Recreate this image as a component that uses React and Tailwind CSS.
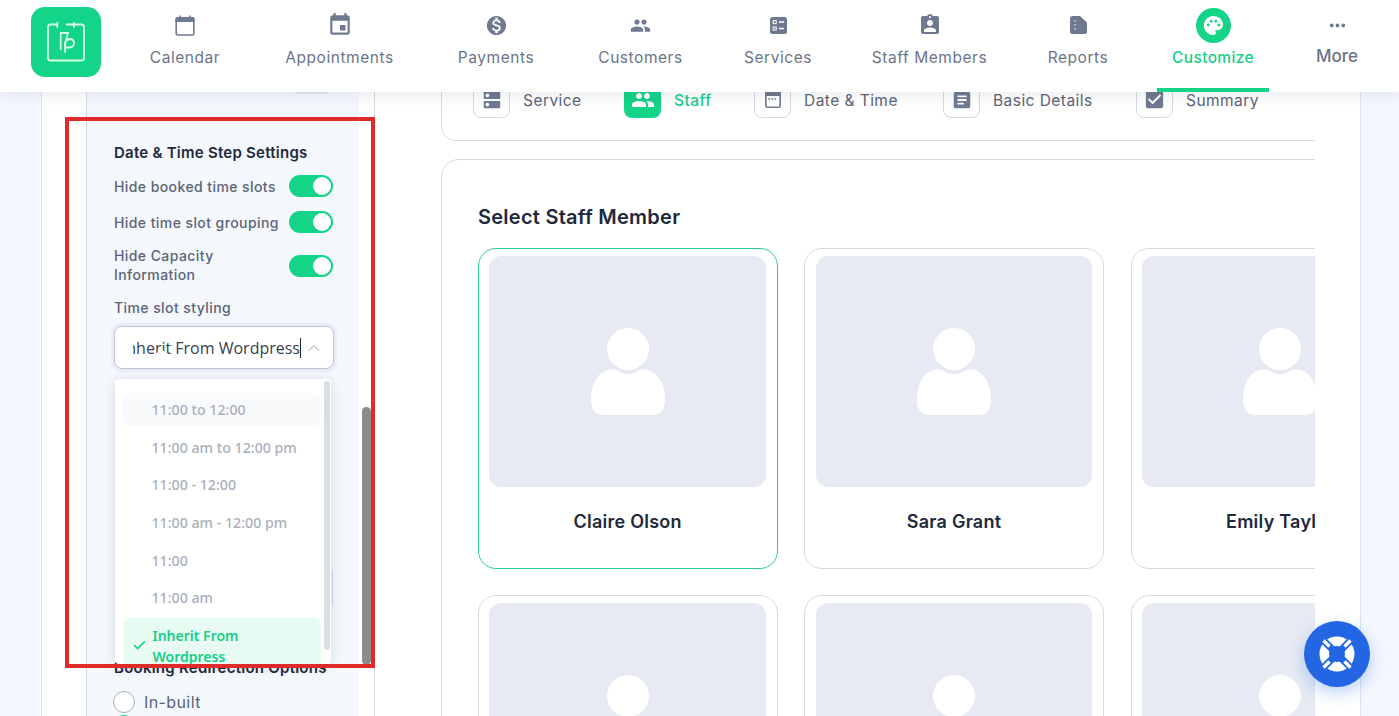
import { ChevronUp, Check } from 'lucide-react';
import { MdEvent, MdMonetizationOn, MdPeople, MdAssignmentInd, MdPalette, MdMoreHoriz, MdDns, MdArticle, MdCheckBox } from 'react-icons/md';

const CalendarIcon = () => (
  <svg width="20" height="21" viewBox="0 0 20 21" fill="none">
    <path d="M5 0.5 V3 M15 0.5 V3" stroke="#6f7a91" strokeWidth="1.6" />
    <path d="M2 2 H18 Q19.5 2 19.5 3.5 V7 H0.5 V3.5 Q0.5 2 2 2 Z" fill="#6f7a91" />
    <rect x="1.2" y="3" width="17.6" height="17" rx="1.5" stroke="#6f7a91" strokeWidth="1.6" />
  </svg>
);

const ServicesIcon = () => (
  <svg width="17" height="17" viewBox="0 0 17 17">
    <rect width="17" height="17" rx="2.5" fill="#6f7a91" />
    <rect x="3.2" y="3.6" width="3" height="3" fill="none" stroke="#fff" strokeWidth="1" />
    <rect x="3.2" y="10" width="3" height="3" fill="none" stroke="#fff" strokeWidth="1" />
    <path d="M9 5 H14 M9 11.5 H14" stroke="#fff" strokeWidth="1.4" />
  </svg>
);

const ReportsIcon = () => (
  <svg width="17" height="18" viewBox="0 0 17 18">
    <path d="M2.5 0 H10 L17 6.5 V15.5 Q17 18 14.5 18 H2.5 Q0 18 0 15.5 V2.5 Q0 0 2.5 0 Z" fill="#6f7a91" />
    <path d="M5 4 V14" stroke="#fff" strokeWidth="1" strokeDasharray="1.5 2.5" />
  </svg>
);

const DateTimeIcon = () => (
  <svg width="16" height="17" viewBox="0 0 16 17" fill="none">
    <rect x="0.8" y="0.8" width="14.4" height="15.4" rx="1.5" stroke="#6f7a91" strokeWidth="1.6" />
    <rect x="1" y="1" width="14" height="4" fill="#6f7a91" />
    <path d="M3.5 8 H12.5" stroke="#6f7a91" strokeWidth="1.4" strokeDasharray="1.6 1.4" />
  </svg>
);

const navItems = [
  { label: 'Calendar', icon: <CalendarIcon />, w: 'w-[140px]' },
  { label: 'Appointments', icon: <MdEvent size={26} color="#6f7a91" />, w: 'w-[169px]' },
  { label: 'Payments', icon: <MdMonetizationOn size={23} color="#6f7a91" />, w: 'w-[144px]' },
  { label: 'Customers', icon: <MdPeople size={21} color="#6f7a91" />, w: 'w-[145px]' },
  { label: 'Services', icon: <ServicesIcon />, w: 'w-[130px]' },
  { label: 'Staff Members', icon: <MdAssignmentInd size={24} color="#6f7a91" />, w: 'w-[173px]' },
  { label: 'Reports', icon: <ReportsIcon />, w: 'w-[124px]' },
];

const steps = [
  { label: 'Service', icon: <MdDns size={22} color="#6f7a91" />, w: 'w-[151px]' },
  { label: 'Staff', icon: <MdPeople size={24} color="#fff" />, w: 'w-[130px]', active: true },
  { label: 'Date & Time', icon: <DateTimeIcon />, w: 'w-[189px]' },
  { label: 'Basic Details', icon: <MdArticle size={22} color="#6f7a91" />, w: 'w-[193px]' },
  { label: 'Summary', icon: <MdCheckBox size={23} color="#6f7a91" />, w: 'w-[150px]' },
];

const timeOptions = ['11:00 to 12:00', '11:00 am to 12:00 pm', '11:00 - 12:00', '11:00 am - 12:00 pm', '11:00', '11:00 am'];
const toggles = ['Hide booked time slots', 'Hide time slot grouping'];
const staff = ['Claire Olson', 'Sara Grant', 'Emily Taylor', '', '', ''];

function Toggle() {
  return (
    <div className="flex h-[22px] w-[44px] shrink-0 items-center justify-end rounded-full bg-[#14d488] pr-[2px]">
      <div className="h-[18px] w-[18px] rounded-full bg-white" />
    </div>
  );
}

function StaffCard({ name, selected }) {
  return (
    <div className={`h-[321px] w-[300px] shrink-0 rounded-[18px] border bg-white pl-[10.3px] pr-[11px] pt-[7px] ${selected ? 'border-[#2fcb90]' : 'border-[#d5d9e4]'}`}>
      <div className="flex h-[231px] items-center justify-center rounded-[12px] bg-[#e7eaf3]">
        <svg width="74" height="88" viewBox="0 0 74 88" fill="#fff">
          <circle cx="37" cy="21" r="21" />
          <path d="M17 42 C23 41 26 42 29 44 C34 47 40 47 45 44 C48 42 51 41 57 42 C67 44 74 56 74 72 C74 81 70 87 62 87 L12 87 C4 87 0 81 0 72 C0 56 7 44 17 42 Z" />
        </svg>
      </div>
      <div className="mt-[21px] text-center text-[18px] font-semibold tracking-[0.25px] text-[#1e293b]">{name}</div>
    </div>
  );
}

export default function App() {
  return (
    <div className="flex h-[716px] w-[1399px] flex-col overflow-hidden bg-[#f4f7fd] font-['Inter',sans-serif]">
      <header className="relative z-10 flex h-[92px] shrink-0 items-start bg-white pl-[31px] shadow-[0_3px_14px_rgba(30,41,80,0.09)]">
        <div className="mt-[7px] flex h-[70px] w-[70px] shrink-0 items-center justify-center rounded-[14px] bg-[#14d488]">
          <svg width="38" height="40" viewBox="0 0 38 40" fill="none" stroke="#d8fbec" strokeWidth="1.8" strokeLinecap="round">
            <path d="M10 2.5 H3.5 Q1 2.5 1 5 V36 Q1 38.5 3.5 38.5 H34.5 Q37 38.5 37 36 V5 Q37 2.5 34.5 2.5 H19.7" />
            <path d="M10.3 0.8 V5 M27 0.8 V5" />
            <path d="M13.7 27 V11 H21 L18.5 21 M18 30 V22 Q18 17.5 23 17 Q27 17.5 27 21 Q27 25.5 22 25.5 H18" />
          </svg>
        </div>
        <nav className="ml-[14px] flex">
          {navItems.map(({ label, icon, w }) => (
            <div key={label} className={`flex h-[92px] flex-col items-center pt-[14px] ${w}`}>
              <div className="flex h-[22px] items-center justify-center">{icon}</div>
              <span className="mt-[10px] text-[15.5px] tracking-[0.55px] text-[#6b7488]">{label}</span>
            </div>
          ))}
          <div className="ml-[17px] flex h-[92px] w-[112px] flex-col items-center border-b-[4px] border-[#14d488] pt-[8px]">
            <div className="flex h-[35px] w-[35px] items-center justify-center rounded-full bg-[#14d488]">
              <MdPalette size={23} color="#fff" />
            </div>
            <span className="mt-[3px] whitespace-nowrap text-[15.5px] font-medium tracking-[0.35px] text-[#14cf87]">Customize</span>
          </div>
          <div className="flex h-[92px] w-[136px] flex-col items-center pt-[13px]">
            <div className="flex h-[24px] items-center"><MdMoreHoriz size={23} color="#6f7a91" /></div>
            <span className="mt-[7px] text-[17px] font-medium text-[#6b7488]">More</span>
          </div>
        </nav>
      </header>

      <div className="relative min-h-0 flex-1 pl-[41px]">
        <div className="flex h-full w-[1320px] overflow-hidden border-x border-[#dde2f2] bg-white">
          <aside className="relative ml-[44px] flex h-full w-[289px] shrink-0 border-x border-[#d5d9e4]">
            <div className="relative w-[272px] overflow-hidden bg-[#f4f7fc] pl-[27px] pr-[26px] pt-[51px]">
              <div className="absolute left-[208px] top-0 h-[2px] w-[33px] rounded-b bg-[#dfe3ee]" />
              <h3 className="text-[15px] font-semibold leading-[20px] tracking-[0.25px] text-[#1e293b]">Date &amp; Time Step Settings</h3>
              <div className="mt-[12px] flex flex-col gap-[14px]">
                {toggles.map(t => (
                  <div key={t} className="flex h-[22px] items-center justify-between whitespace-nowrap text-[14px] font-medium tracking-[0.42px] text-[#5b6478]">
                    <span>{t}</span>
                    <Toggle />
                  </div>
                ))}
                <div className="-mt-[1px] flex items-center justify-between text-[14px] font-medium leading-[19px] tracking-[0.42px] text-[#5b6478]">
                  <span className="w-[130px]">Hide Capacity Information</span>
                  <div className="pt-[2px]"><Toggle /></div>
                </div>
              </div>
              <div className="mt-[14px] text-[14px] font-medium leading-[20px] tracking-[0.42px] text-[#5b6478]">Time slot styling</div>
              <div className="mt-[8px] flex h-[43px] w-[220px] items-center overflow-hidden rounded-[8px] border border-[#bcc3d8] bg-white pl-[18px] pr-[12px] shadow-[0_0_0_3px_#e9ecf5]">
                <div className="flex w-[168px] shrink-0 justify-end overflow-hidden whitespace-nowrap border-r border-[#1e293b] font-['Open_Sans',sans-serif] text-[16px] leading-[20px] text-[#344054]">
                  <span className="shrink-0">Inherit From Wordpress</span>
                </div>
                <ChevronUp size={20} className="ml-[3px] shrink-0 text-[#c3c8d4]" strokeWidth={1.3} />
              </div>
              <div className="absolute left-[68px] top-[256px] z-20 h-0 w-0 border-x-[6px] border-b-[7px] border-x-transparent border-b-white" />
              <div className="absolute left-[245px] top-[478px] h-[35px] w-px bg-[#d5d9e4]" />
              <div className="relative ml-[1px] mt-[10px] h-[285px] w-[216px] overflow-hidden rounded-[4px] bg-white pl-[8px] pr-[10px] pt-[12px] shadow-[0_2px_12px_rgba(30,41,80,0.14)]">
                <div className="absolute right-[1px] top-[2px] h-[269px] w-[6px] rounded-full bg-[#dcdfe2]" />
                <div className="flex flex-col font-['Noto_Sans',sans-serif] text-[14.2px] font-medium text-[#a9afbb]">
                  {timeOptions.map((opt, i) => (
                    <div key={opt} className="flex h-[37.6px] shrink-0 items-center">
                      <div className={`flex h-[33px] w-full items-center rounded-[6px] pl-[28.5px] ${i === 0 ? 'bg-[#f9fafc]' : ''}`}>{opt}</div>
                    </div>
                  ))}
                </div>
                <div className="mt-[1px] flex h-[50px] items-start gap-[5.5px] rounded-[6px] bg-[#e8fbf3] pl-[9px] pt-[7px] font-['Noto_Sans',sans-serif] text-[14px] font-semibold leading-[21px] text-[#14cf87]">
                  <Check size={15} className="mt-[13px] shrink-0" strokeWidth={2.5} />
                  <span className="w-[110px]">Inherit From Wordpress</span>
                </div>
              </div>
              <div className="mt-[-6px] whitespace-nowrap text-[15px] font-semibold leading-[20px] tracking-[0.25px] text-[#1e293b]">Booking Redirection Options</div>
              <div className="-ml-[1px] mt-[12px] flex items-center gap-[9px] text-[16px] tracking-[0.4px] text-[#5b6478]">
                <div className="h-[22px] w-[22px] rounded-full border border-[#aab1c2] bg-white" />
                In-built
              </div>
              <div className="-ml-[1px] mt-[1px] h-[22px] w-[22px] rounded-full border-[2px] border-[#14d488] bg-white" />
            </div>
            <div className="relative flex-1">
              <div className="absolute left-[3px] top-[315px] h-[258px] w-[9px] rounded-full bg-[#8c8c8c]" />
            </div>
          </aside>

          <main className="ml-[66px] w-[874px] min-w-0 shrink-0 overflow-hidden">
            <div className="-mt-[40px] flex h-[89px] w-[920px] items-end rounded-[14px] border border-[#d5d9e4] bg-white pb-[22px] pl-[31px]">
              {steps.map(({ label, icon, w, active }) => (
                <div key={label} className={`flex items-center gap-[13px] ${w}`}>
                  <div className={`flex h-[37px] w-[37px] shrink-0 items-center justify-center rounded-[8px] ${active ? 'bg-[#14d488]' : 'border border-[#d5d9e4]'}`}>
                    {icon}
                  </div>
                  <span className={`relative top-[1px] whitespace-nowrap text-[15.5px] tracking-[0.45px] ${active ? 'font-medium text-[#14cf87]' : 'text-[#5b6478]'}`}>{label}</span>
                </div>
              ))}
            </div>
            <div className="mt-[18px] w-[1000px] rounded-t-[18px] border border-[#d5d9e4] bg-white px-[36px] pt-[44px]">
              <h2 className="text-[20px] font-semibold leading-[26px] tracking-[0.25px] text-[#1e293b]">Select Staff Member</h2>
              <div className="mt-[18px] grid w-[960px] grid-cols-[300px_300px_300px] gap-x-[26.4px] gap-y-[26px]">
                {staff.map((name, i) => <StaffCard key={i} name={name} selected={i === 0} />)}
              </div>
            </div>
          </main>
        </div>

        <div className="absolute bottom-[29px] right-[29px] flex h-[66px] w-[66px] items-center justify-center rounded-full bg-[#2266e3] shadow-[0_6px_16px_rgba(34,102,227,0.3)]">
          <svg width="40" height="40" viewBox="0 0 40 40">
            <circle cx="20" cy="20" r="17.5" fill="#fff" />
            <circle cx="20" cy="20" r="8" fill="#2266e3" />
            <path d="M7 7 L33 33 M33 7 L7 33" stroke="#2266e3" strokeWidth="7" />
            <path d="M6.5 6.5 L12.5 12.5 M33.5 6.5 L27.5 12.5 M6.5 33.5 L12.5 27.5 M33.5 33.5 L27.5 27.5" stroke="#fff" strokeWidth="3.4" />
          </svg>
        </div>
      </div>

      <div className="pointer-events-none absolute left-[65px] top-[117px] h-[551px] w-[310px] border-[4px] border-[#e02b2b]" />
    </div>
  );
}
